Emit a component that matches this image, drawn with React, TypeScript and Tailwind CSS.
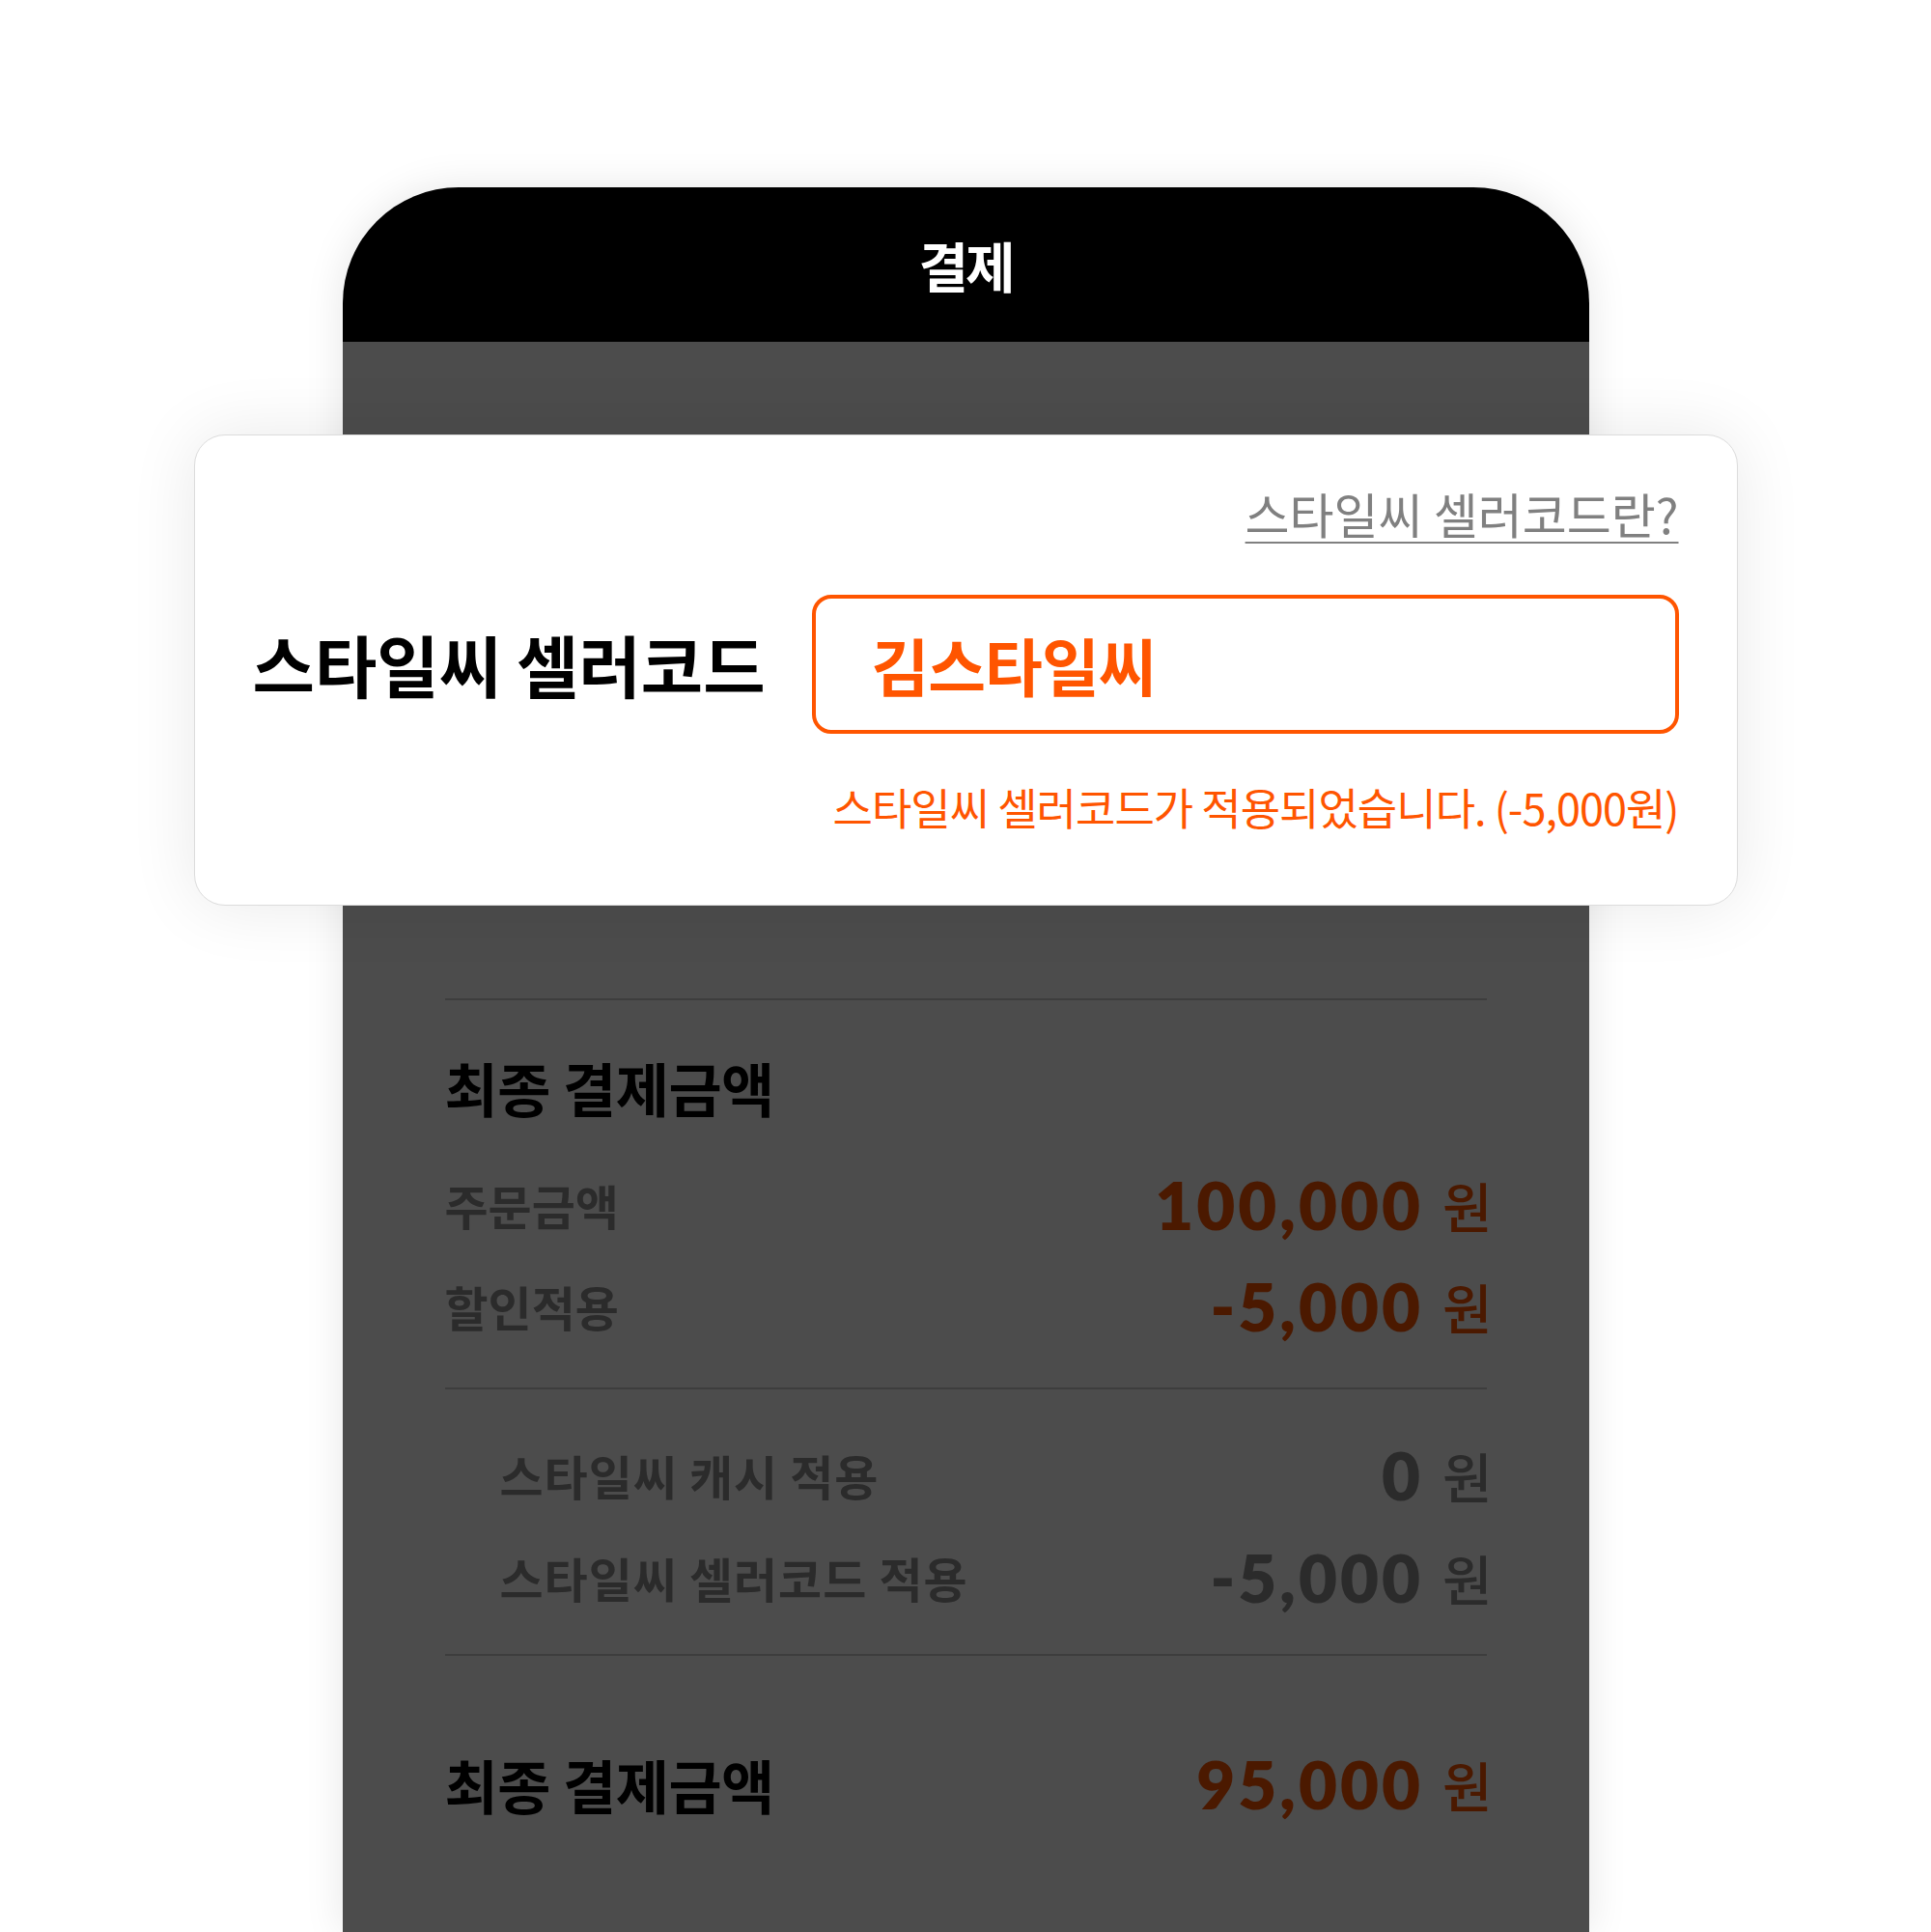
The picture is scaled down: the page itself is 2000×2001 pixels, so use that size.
import React from "react";

const kr = "font-['Noto_Sans_CJK_KR',sans-serif]";
const num = "font-['Lato',sans-serif]";

type Row = { label: string; value: string; tone: "red" | "gray"; indent?: boolean };

const orderRows: Row[] = [
  { label: "주문금액", value: "100,000", tone: "red" },
  { label: "할인적용", value: "-5,000", tone: "red" },
];

const detailRows: Row[] = [
  { label: "스타일씨 캐시 적용", value: "0", tone: "gray", indent: true },
  { label: "스타일씨 셀러코드 적용", value: "-5,000", tone: "gray", indent: true },
];

function Amount({ value, tone }: { value: string; tone: "red" | "gray" }) {
  const color = tone === "red" ? "text-[#4b1900]" : "text-[#2b2b2b]";
  return (
    <div className={`-mr-[6px] flex items-center gap-[20px] ${color}`}>
      <span className={`${num} text-[69px] font-extrabold leading-[72px] tracking-[3px]`}>{value}</span>
      <span className={`${kr} text-[56px] font-medium leading-[72px]`}>원</span>
    </div>
  );
}

function PriceRow({ row }: { row: Row }) {
  return (
    <div className={`flex h-[72px] items-center justify-between ${row.indent ? "pl-[57px]" : ""}`}>
      <span className={`${kr} ${row.indent ? "text-[49px] tracking-[1px]" : "text-[49px] tracking-[0px]"} font-bold leading-[72px] text-[#2b2b2b]`}>
        {row.label}
      </span>
      <Amount value={row.value} tone={row.tone} />
    </div>
  );
}

export default function App() {
  return (
    <div className={`${kr} min-h-screen overflow-hidden bg-white flex justify-center pt-[194px]`}>
      <div className="w-[1291px] h-[1807px] flex flex-col rounded-t-[120px] shadow-[0_0_40px_rgba(0,0,0,0.10)]">
        {/* header */}
        <div className="h-[160px] shrink-0 bg-black rounded-t-[120px] flex items-center justify-center">
          <h1 className="text-[56px] font-bold leading-none tracking-[-3px] text-white">결제</h1>
        </div>

        {/* dimmed body */}
        <div className="flex-1 bg-[#4c4c4c] pt-[96px]">
          {/* seller code callout */}
          <div className="-mx-[154px] h-[488px] rounded-[32px] border border-[#dcdcdc] bg-white px-[60px] pt-[50px] flex flex-col shadow-[0_0_70px_rgba(0,0,0,0.09)]">
            <div className="flex justify-end">
              <a className="text-[50px] leading-[60px] tracking-[0px] text-[#808080] underline decoration-2 underline-offset-[8px]">
                스타일씨 셀러코드란?
              </a>
            </div>
            <div className="mt-[55px] flex items-center justify-between">
              <span className="text-[70px] font-bold leading-none tracking-[0px] text-black">스타일씨 셀러코드</span>
              <div className="w-[898px] h-[144px] rounded-[20px] border-4 border-[#ff5500] flex items-center pl-[58px]">
                <span className="text-[65px] font-bold leading-none tracking-[-1px] text-[#ff5500]">김스타일씨</span>
              </div>
            </div>
            <div className="mt-[46px] flex justify-end">
              <p className="text-[45px] leading-[60px] tracking-[-1px] text-[#ff5500]">
                스타일씨 셀러코드가 적용되었습니다. (-5,000원)
              </p>
            </div>
          </div>

          {/* summary */}
          <div className="mx-[106px] mt-[96px] flex flex-col">
            <div className="border-t-2 border-[#3d3d3d]" />
            <div className="mt-[54px] h-[72px] flex items-center">
              <h2 className="text-[60px] font-bold leading-[72px] tracking-[-0.5px] text-black">최종 결제금액</h2>
            </div>
            <div className="mt-[50px] flex flex-col gap-[33px]">
              {orderRows.map((r) => (
                <PriceRow key={r.label} row={r} />
              ))}
            </div>
            <div className="mt-[48px] border-t-2 border-[#3d3d3d]" />
            <div className="mt-[53px] flex flex-col gap-[34px]">
              {detailRows.map((r) => (
                <PriceRow key={r.label} row={r} />
              ))}
            </div>
            <div className="mt-[43px] border-t-2 border-[#3d3d3d]" />
            <div className="mt-[97px] flex h-[72px] items-center justify-between">
              <h2 className="text-[60px] font-bold leading-[72px] tracking-[-0.5px] text-black">최종 결제금액</h2>
              <Amount value="95,000" tone="red" />
            </div>
          </div>
        </div>
      </div>
    </div>
  );
}
